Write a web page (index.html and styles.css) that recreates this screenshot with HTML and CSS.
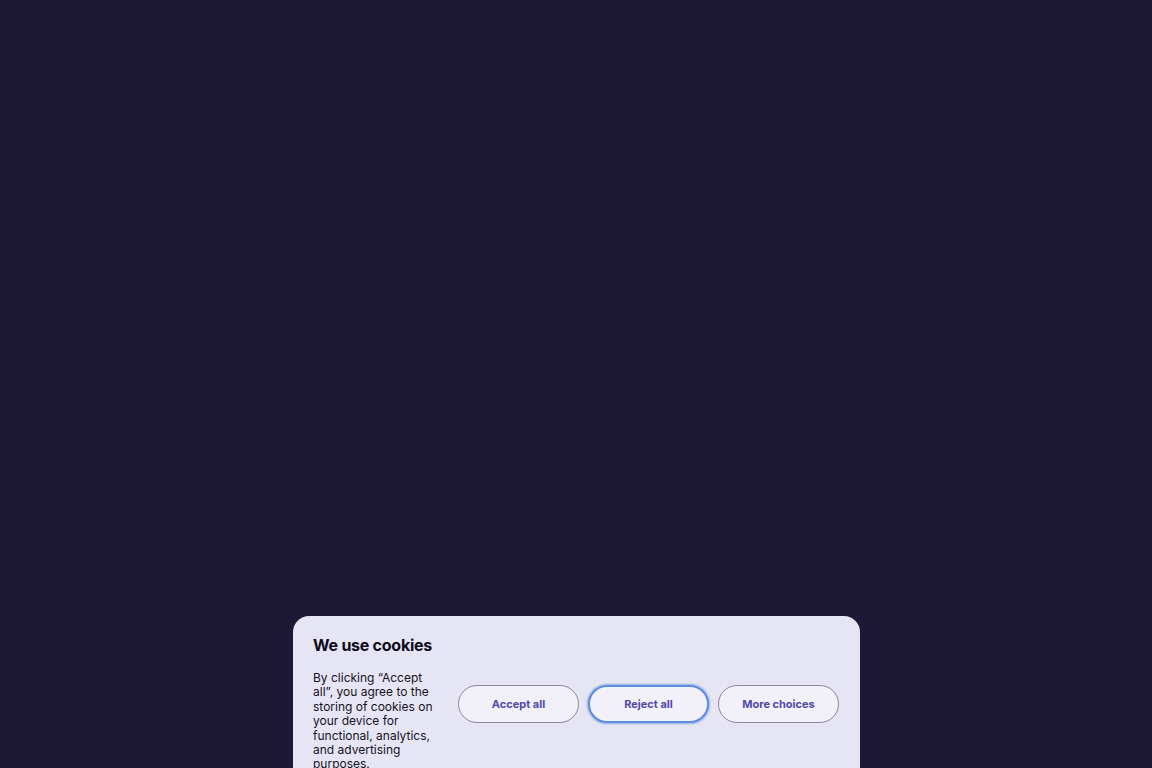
FILE: index.html
```html
<!DOCTYPE html>
<html lang="en">
<head>
<meta charset="utf-8">
<title>Cookies</title>
<link rel="stylesheet" href="styles.css">
</head>
<body>
<div class="page">
  <section class="banner">
    <h2 class="title">We use cookies</h2>
    <div class="row">
      <p class="text">By clicking “Accept all”, you agree to the storing of cookies on your device for functional, analytics, and advertising purposes.</p>
      <div class="actions">
        <button class="btn">Accept all</button>
        <button class="btn focus">Reject all</button>
        <button class="btn">More choices</button>
      </div>
    </div>
  </section>
</div>
</body>
</html>
```

FILE: styles.css
```css
html, body {
  margin: 0;
  padding: 0;
  height: 100%;
  overflow: hidden;
}
body {
  background: #1c1836;
  font-family: Inter, "Noto Sans", sans-serif;
}
.page {
  height: 768px;
  display: flex;
  justify-content: center;
  align-items: flex-start;
  padding-top: 616px;
  box-sizing: border-box;
}
.banner {
  width: 567px;
  margin-left: 1px;
  background: #e6e5f3;
  border-radius: 16px;
  padding: 18px 20px 20px 20px;
  box-sizing: border-box;
  height: 300px;
}
.title {
  margin: 0;
  font-size: 16px;
  font-weight: 700;
  color: #0d0b1c;
  line-height: 22px;
  letter-spacing: -0.25px;
}
.row {
  display: flex;
  gap: 20px;
  margin-top: 15px;
  align-items: flex-start;
}
.text {
  margin: 0;
  width: 125px;
  flex: none;
  font-size: 12px;
  line-height: 14.4px;
  color: #15131f;
}
.actions {
  display: flex;
  gap: 9px;
  margin-top: 14px;
}
.btn {
  width: 121px;
  height: 38px;
  border-radius: 19px;
  border: 1px solid #8b879e;
  background: #f2f1f9;
  color: #4f49aa;
  font-family: Inter, "Noto Sans", sans-serif;
  font-size: 11px;
  font-weight: 700;
  padding: 0;
}
.btn.focus {
  border: 2px solid #5d8de0;
  box-shadow: 0 0 2px 1px rgba(93, 141, 224, 0.6);
}
```
